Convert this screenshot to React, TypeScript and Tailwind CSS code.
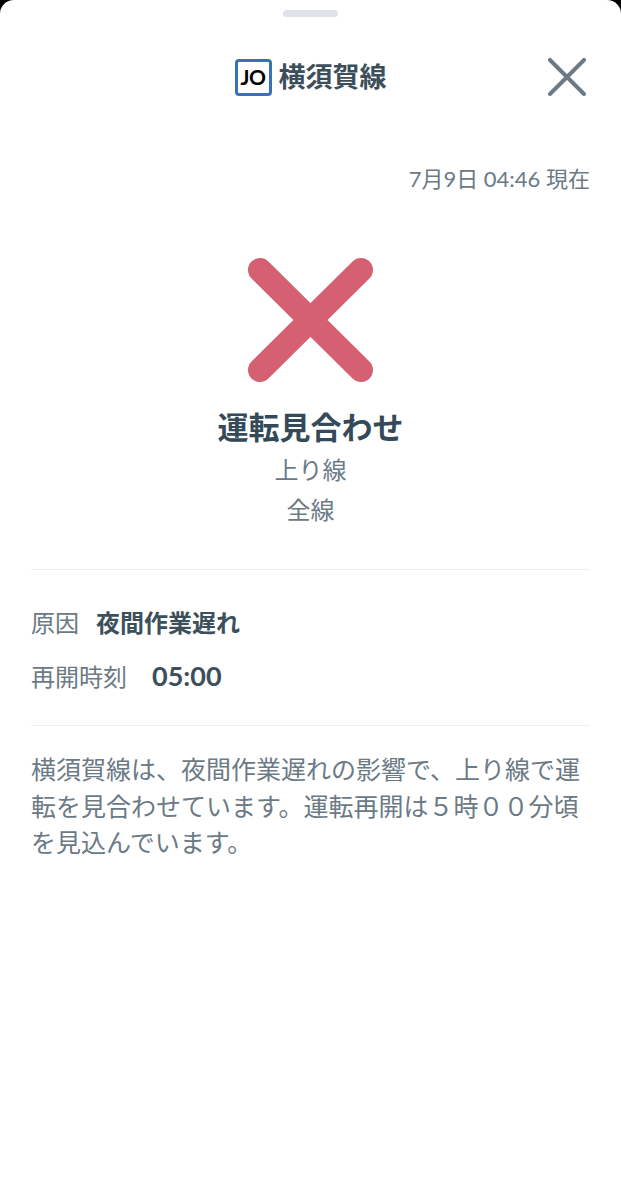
const font = { fontFamily: '"Lato", "Noto Sans CJK JP", sans-serif' };

export default function App() {
  return (
    <div className="h-[1200px] w-[621px] overflow-hidden bg-black" style={font}>
      <div className="h-full rounded-t-[14px] bg-white">
        <div className="flex justify-center pt-[10px]">
          <div className="h-[7px] w-[55px] rounded-full bg-[#e1e2e9]" />
        </div>
        <header className="relative mt-[41px] flex h-[38px] items-center justify-center gap-[7px]">
          <div className="flex h-[37px] w-[37px] items-center justify-center rounded-[4px] border-[3px] border-[#3a70b5] bg-white text-[21px] font-bold tracking-[-0.5px] text-black">
            JO
          </div>
          <h1 className="text-[27px] leading-[38px] font-bold text-[#3d4f5b]">横須賀線</h1>
          <svg className="absolute top-0 right-[35px] h-[38px] w-[38px]" viewBox="0 0 38 38" fill="none" stroke="#6b7a85" strokeWidth="4" strokeLinecap="round">
            <path d="M2 2 L36 36 M36 2 L2 36" />
          </svg>
        </header>
        <div className="px-[31px]">
          <p className="mt-[67px] text-right text-[22px] leading-[32px] text-[#6b7a85]">7月9日 04:46 現在</p>
          <div className="mt-[63px] flex flex-col items-center">
            <svg className="h-[124px] w-[125px]" viewBox="0 0 125 124" fill="none" stroke="#d46071" strokeWidth="24" strokeLinecap="round">
              <path d="M12 12 L113 112 M113 12 L12 112" />
            </svg>
            <h2 className="mt-[24px] text-[31px] leading-[42px] font-bold text-[#354a59]">運転見合わせ</h2>
            <p className="mt-[2px] text-[24px] leading-[40px] text-[#6b7a85]">上り線</p>
            <p className="text-[24px] leading-[40px] text-[#6b7a85]">全線</p>
          </div>
          <div className="mt-[39px] border-t border-[#eceef0] pt-[35px]">
            <div className="flex h-[35px] items-center gap-[17px] text-[24px]">
              <span className="text-[#6b7a85]">原因</span>
              <span className="font-bold text-[#3d4f5b]">夜間作業遅れ</span>
            </div>
            <div className="mt-[19px] flex h-[35px] items-center gap-[25px] text-[24px]">
              <span className="text-[#6b7a85]">再開時刻</span>
              <span className="text-[27px] font-bold text-[#3d4f5b]">05:00</span>
            </div>
          </div>
          <div className="mt-[31px] border-t border-[#eceef0] pt-[25px]">
            <p className="text-[25px] leading-[36.5px] text-[#6b7a85]">
              横須賀線は、夜間作業遅れの影響で、上り線で運転を見合わせています。運転再開は５時００分頃を見込んでいます。
            </p>
          </div>
        </div>
      </div>
    </div>
  );
}
